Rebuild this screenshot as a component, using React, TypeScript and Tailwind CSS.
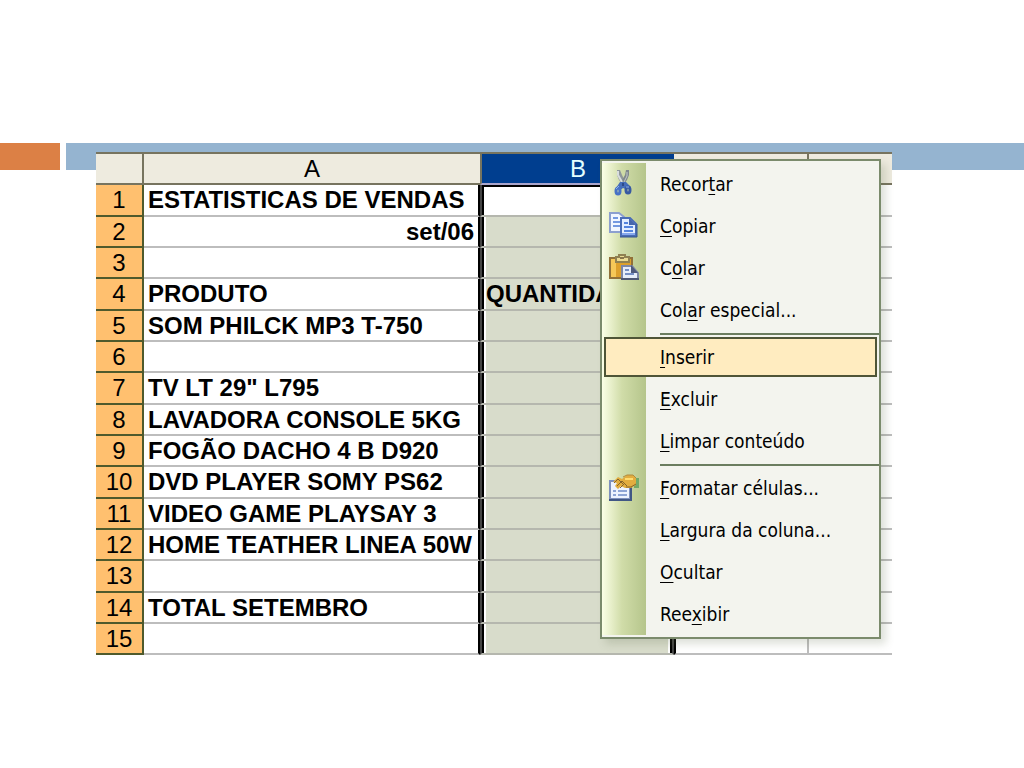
import React from "react";
import { clsx } from "clsx";

interface Row {
  product?: string;
  amount?: string;
  alignRight?: boolean;
}

interface MenuEntry {
  label: string;
  // index of the underlined shortcut letter
  hotkey: number;
  icon?: React.ReactNode;
  active?: boolean;
}

const rows: Row[] = [
  { product: "ESTATISTICAS DE VENDAS" },
  { product: "set/06", alignRight: true },
  {},
  { product: "PRODUTO", amount: "QUANTIDADE" },
  { product: "SOM PHILCK MP3 T-750" },
  {},
  { product: 'TV LT 29" L795' },
  { product: "LAVADORA CONSOLE 5KG" },
  { product: "FOGÃO DACHO 4 B D920" },
  { product: "DVD PLAYER SOMY PS62" },
  { product: "VIDEO GAME PLAYSAY 3" },
  { product: "HOME TEATHER LINEA 50W" },
  {},
  { product: "TOTAL SETEMBRO" },
  {},
];

function CutIcon() {
  return (
    <svg width="30" height="28" viewBox="0 0 30 28" fill="none" aria-hidden="true">
      <path d="M8 0v5l2 5 4 5 3-2-4-8-2-5z" fill="#8f979a" />
      <path d="M20 0v5l-2 5-4 5-2-3 4-7 1-5z" fill="#7f888c" />
      <path d="M9 1v4l4 7" stroke="#d9dddd" strokeWidth="2" />
      <path d="M18 2v4l-3 6" stroke="#c3c8c9" strokeWidth="1" />
      <path d="M11 12h6l5 5-3 3-5-2-4 3-3-3z" fill="#456dba" />
      <ellipse cx="9" cy="21" rx="2" ry="3" fill="#c3d2ae" stroke="#4772c6" strokeWidth="3" />
      <ellipse cx="19" cy="20" rx="2" ry="3" fill="#c3d2ae" stroke="#3759a2" strokeWidth="3" />
      <path d="M7 19l3-3M17 17h3" stroke="#8fb0ec" strokeWidth="1" />
      <path d="M13 13h2v3h-2z" fill="#2d4a8a" />
    </svg>
  );
}

function CopyIcon() {
  return (
    <svg width="30" height="28" viewBox="0 0 30 28" fill="none" aria-hidden="true">
      <path d="M1 1h9l5 4v15H1z" fill="#f1f6ff" stroke="#8c9fcf" strokeWidth="2" />
      <path d="M4 6h5M4 10h7M4 14h7" stroke="#7398e0" strokeWidth="2" />
      <path d="M12 6h9l6 6v12H12z" fill="#e4eeff" stroke="#4b6db6" strokeWidth="2" />
      <path d="M20 6v7h7z" fill="#4767ad" />
      <path d="M15 11h4M15 15h9M15 19h9" stroke="#5584dd" strokeWidth="2" />
      <path d="M13 22h13" stroke="#86a8ee" strokeWidth="2" />
      <path d="M28 12v13H11" stroke="#35558f" strokeWidth="1" />
    </svg>
  );
}

function PasteIcon() {
  return (
    <svg width="30" height="28" viewBox="0 0 30 28" fill="none" aria-hidden="true">
      <path d="M1 4h22v20H1z" fill="#dda02c" stroke="#917139" strokeWidth="2" />
      <path d="M2 5h5v18H2z" fill="#f6c858" />
      <path d="M7 3h3V1h6v2h4v5H7z" fill="#eadb93" stroke="#8f8152" strokeWidth="2" />
      <path d="M11 3h4v2h-4z" fill="#88764a" />
      <path d="M13 12h10l6 7v6H13z" fill="#e6edfa" stroke="#7d87a5" strokeWidth="2" />
      <path d="M22 11v8h7z" fill="#4e597b" />
      <path d="M16 16h4M16 20h9" stroke="#758fc5" strokeWidth="2" />
      <path d="M12 25h18" stroke="#4d5774" strokeWidth="2" />
    </svg>
  );
}

function FormatIcon() {
  return (
    <svg width="30" height="28" viewBox="0 0 30 28" fill="none" aria-hidden="true">
      <path d="M1 7h20v18H1z" fill="#edf3ff" stroke="#7e91be" strokeWidth="2" />
      <path d="M0 26h22V9" stroke="#415785" strokeWidth="2" />
      <path d="M4 17h3M9 17h9M4 21h3M9 21h9" stroke="#8ea5d6" strokeWidth="2" />
      <path d="M25 4h5v10h-5z" fill="#72a968" />
      <path d="M4 8l5-5 4 2 5-4h6l3 3v7l-5 3h-6l-4-2-3 3-3-3 2-3z" fill="#e2ad3f" />
      <path d="M14 3l4-2h6l3 3" stroke="#b08a3c" strokeWidth="1" />
      <path d="M5 9l4-4 6 6M8 12l5-5 5 5M11 14l5-5M17 13h5l5-3" stroke="#86652b" strokeWidth="1" />
      <path d="M16 5h8" stroke="#ffdc70" strokeWidth="2" />
    </svg>
  );
}

const menuGroups: MenuEntry[][] = [
  [
    { label: "Recortar", hotkey: 5, icon: <CutIcon /> },
    { label: "Copiar", hotkey: 0, icon: <CopyIcon /> },
    { label: "Colar", hotkey: 1, icon: <PasteIcon /> },
    { label: "Colar especial...", hotkey: 3 },
  ],
  [
    { label: "Inserir", hotkey: 0, active: true },
    { label: "Excluir", hotkey: 0 },
    { label: "Limpar conteúdo", hotkey: 0 },
  ],
  [
    { label: "Formatar células...", hotkey: 0, icon: <FormatIcon /> },
    { label: "Largura da coluna...", hotkey: 0 },
    { label: "Ocultar", hotkey: 0 },
    { label: "Reexibir", hotkey: 3 },
  ],
];

function MenuItem({ label, hotkey, icon, active }: MenuEntry) {
  return (
    <button
      type="button"
      role="menuitem"
      className="flex h-[42px] w-full items-center px-[2px] text-left"
    >
      <span
        className={clsx(
          "flex h-10 w-full items-center border-2",
          active ? "border-[#4f5537] bg-[#ffecc0]" : "border-transparent"
        )}
      >
        <span className="flex w-[54px] shrink-0 pl-[3px]">{icon}</span>
        <span className="whitespace-nowrap">
          {label.slice(0, hotkey)}
          <span className="underline decoration-1 underline-offset-[3px] [text-decoration-skip-ink:none]">
            {label[hotkey]}
          </span>
          {label.slice(hotkey + 1)}
        </span>
      </span>
    </button>
  );
}

function ContextMenu() {
  return (
    <div
      role="menu"
      aria-label="Coluna"
      className="absolute top-[7px] left-[504px] w-[281px] border-2 border-[#7b8b6c] bg-[#f3f4ee] py-[2px] font-['DejaVu_Sans_Condensed','DejaVu_Sans',sans-serif] text-[19px] leading-6 text-black shadow-[5px_5px_8px_rgba(90,105,70,0.2)]"
    >
      <div className="bg-[linear-gradient(to_right,#fbffe6,#d0dca8_20px,#b5c58b_44px,transparent_44px)]">
        {menuGroups.map((group, i) => (
          <React.Fragment key={i}>
            {i > 0 && (
              <div role="separator" className="flex h-[5px] items-center pl-[58px]">
                <div className="h-[2px] w-full bg-[#6b7d5f]" />
              </div>
            )}
            {group.map((item) => (
              <MenuItem key={item.label} {...item} />
            ))}
          </React.Fragment>
        ))}
      </div>
    </div>
  );
}

function Sheet() {
  return (
    <table className="w-full table-fixed border-separate border-spacing-0 bg-white font-['Liberation_Sans',Arial,sans-serif] text-2xl leading-7 text-black">
      <colgroup>
        <col className="w-12" />
        <col className="w-[336px]" />
        <col className="w-[194px]" />
        <col className="w-[135px]" />
        <col />
      </colgroup>
      <thead>
        <tr className="h-[33px] bg-[#eeebdf]">
          <th className="border-y-2 border-r-2 border-[#77745f] p-0" />
          <th className="border-y-2 border-[#77745f] p-0 font-normal">A</th>
          <th className="border-y-2 border-l-2 border-t-[#77745f] border-b-[#aaa5cb] border-l-[#77745f] bg-[#003e8f] p-0 font-normal text-[#e4ffff]">
            B
          </th>
          <th className="border-y-2 border-r-2 border-[#77745f] p-0" />
          <th className="border-y-2 border-[#77745f] p-0" />
        </tr>
      </thead>
      <tbody>
        {rows.map((row, i) => (
          <tr key={i} className={i % 3 === 0 ? "h-8" : "h-[31px]"}>
            <th
              scope="row"
              className="border-r-2 border-b-2 border-[#4f5a2c] bg-[#ffc06f] p-0 font-normal"
            >
              {i + 1}
            </th>
            <td
              className={clsx(
                "border-r-2 border-b-2 border-r-black border-b-[#bdbdbd] px-1 py-0 font-bold whitespace-nowrap",
                row.alignRight && "text-right"
              )}
            >
              {row.product}
            </td>
            <td
              className={clsx(
                "overflow-hidden border-x-2 border-b-2 border-x-[#444444] border-b-[#b5b7ae] px-1 py-0 font-bold whitespace-nowrap",
                i === 0
                  ? "bg-white shadow-[inset_2px_2px_0_#000,inset_-2px_0_0_#000]"
                  : "bg-[#d8dccb] shadow-[inset_2px_0_0_#000,inset_-2px_0_0_#000,inset_4px_0_0_#fff,inset_-4px_0_0_#fff]"
              )}
            >
              {row.amount}
            </td>
            <td className="border-r-2 border-b-2 border-l-2 border-r-[#bdbdbd] border-b-[#bdbdbd] border-l-black p-0" />
            <td className="border-b-2 border-[#bdbdbd] p-0" />
          </tr>
        ))}
      </tbody>
    </table>
  );
}

export default function App() {
  return (
    <main className="min-h-screen bg-white pt-[143px]">
      <div className="flex h-[27px] gap-[6px]">
        <div className="w-[60px] bg-[#dc8045]" />
        <div className="flex-1 bg-[#95b4d0]" />
      </div>

      {/* The sheet overlaps the coloured band */}
      <div className="relative -mt-[18px] mr-[132px] ml-24">
        <Sheet />
        <ContextMenu />
      </div>
    </main>
  );
}
